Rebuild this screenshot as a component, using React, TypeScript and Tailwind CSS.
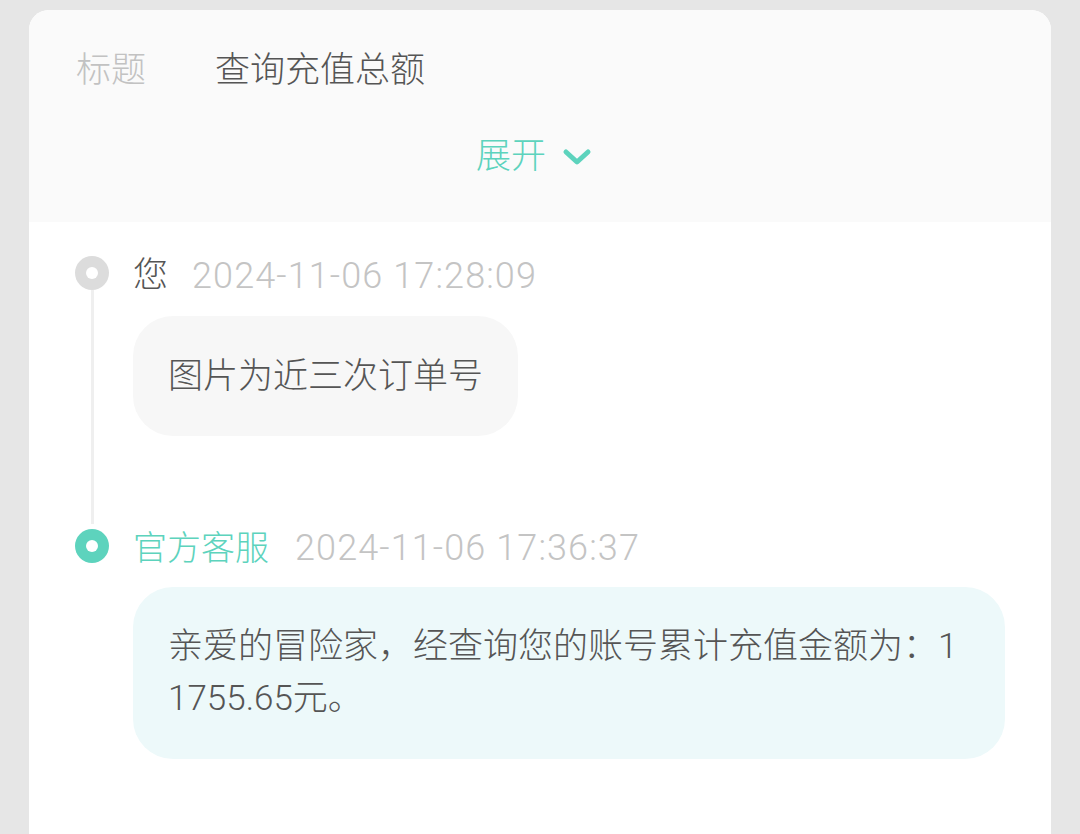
import React from "react";

const font = { fontFamily: 'Roboto, "Noto Sans CJK SC", "Noto Sans", sans-serif' };

function Dot({ active }: { active?: boolean }) {
  return (
    <div
      className={
        "flex h-[34px] w-[34px] shrink-0 items-center justify-center rounded-full " +
        (active ? "bg-[#5dd3bd]" : "bg-[#dcdcdc]")
      }
    >
      <div className="h-[12px] w-[12px] rounded-full bg-white" />
    </div>
  );
}

export default function App() {
  return (
    <div className="min-h-[834px] overflow-hidden bg-[#e6e6e6] pt-[10px] font-light" style={font}>
      <div className="mx-[29px] h-[900px] overflow-hidden rounded-[20px] bg-white">
        <div className="flex h-[212px] flex-col bg-[#fafafa] px-[47px]">
          <div className="mt-[37px] flex items-center text-[35px] leading-[48px]">
            <span className="text-[#c2c2c2]">标题</span>
            <span className="ml-[69px] text-[#555555]">查询充值总额</span>
          </div>
          <div className="mt-[38px] flex items-center justify-center gap-[16px] text-[35px] leading-[48px] text-[#5dd3bd]">
            <span>展开</span>
            <svg width="30" height="20" viewBox="0 0 30 20" className="mr-[12px]">
              <polyline
                points="4,5 15,15 26,5"
                fill="none"
                stroke="#5dd3bd"
                strokeWidth="5"
                strokeLinecap="round"
                strokeLinejoin="round"
              />
            </svg>
          </div>
        </div>

        <div className="px-[46px] pt-[29px]">
          {/* item 1 */}
          <div className="flex">
            <div className="flex w-[34px] flex-col items-center pt-[5px]">
              <Dot />
              <div className="w-[3px] flex-1 bg-[#efefef]" />
            </div>
            <div className="ml-[24px] flex-1 pb-[88px]">
              <div className="flex items-center pt-[3px] leading-[44px]">
                <span className="text-[35px] text-[#555555]">您</span>
                <span className="ml-[24px] text-[36px] tracking-[1.1px] text-[#c4c4c4]">2024-11-06 17:28:09</span>
              </div>
              <div className="mt-[18px] w-fit rounded-[40px] bg-[#f7f7f7] px-[35px] pb-[33px] pt-[35px] text-[35px] leading-[52px] text-[#555555]">
                图片为近三次订单号
              </div>
            </div>
          </div>
          {/* item 2 */}
          <div className="flex">
            <div className="flex w-[34px] flex-col items-center pt-[5px]">
              <Dot active />
            </div>
            <div className="ml-[24px] flex-1">
              <div className="flex items-center pt-[2px] leading-[44px]">
                <span className="text-[34px] text-[#5dd3bd]">官方客服</span>
                <span className="ml-[26px] text-[36px] tracking-[1.1px] text-[#c4c4c4]">2024-11-06 17:36:37</span>
              </div>
              <div className="mt-[17px] break-all rounded-[40px] bg-[#edf9fa] px-[35px] py-[34px] text-[35px] leading-[52px] text-[#555555]">
                亲爱的冒险家，经查询您的账号累计充值金额为：11755.65元。
              </div>
            </div>
          </div>
        </div>
      </div>
    </div>
  );
}
